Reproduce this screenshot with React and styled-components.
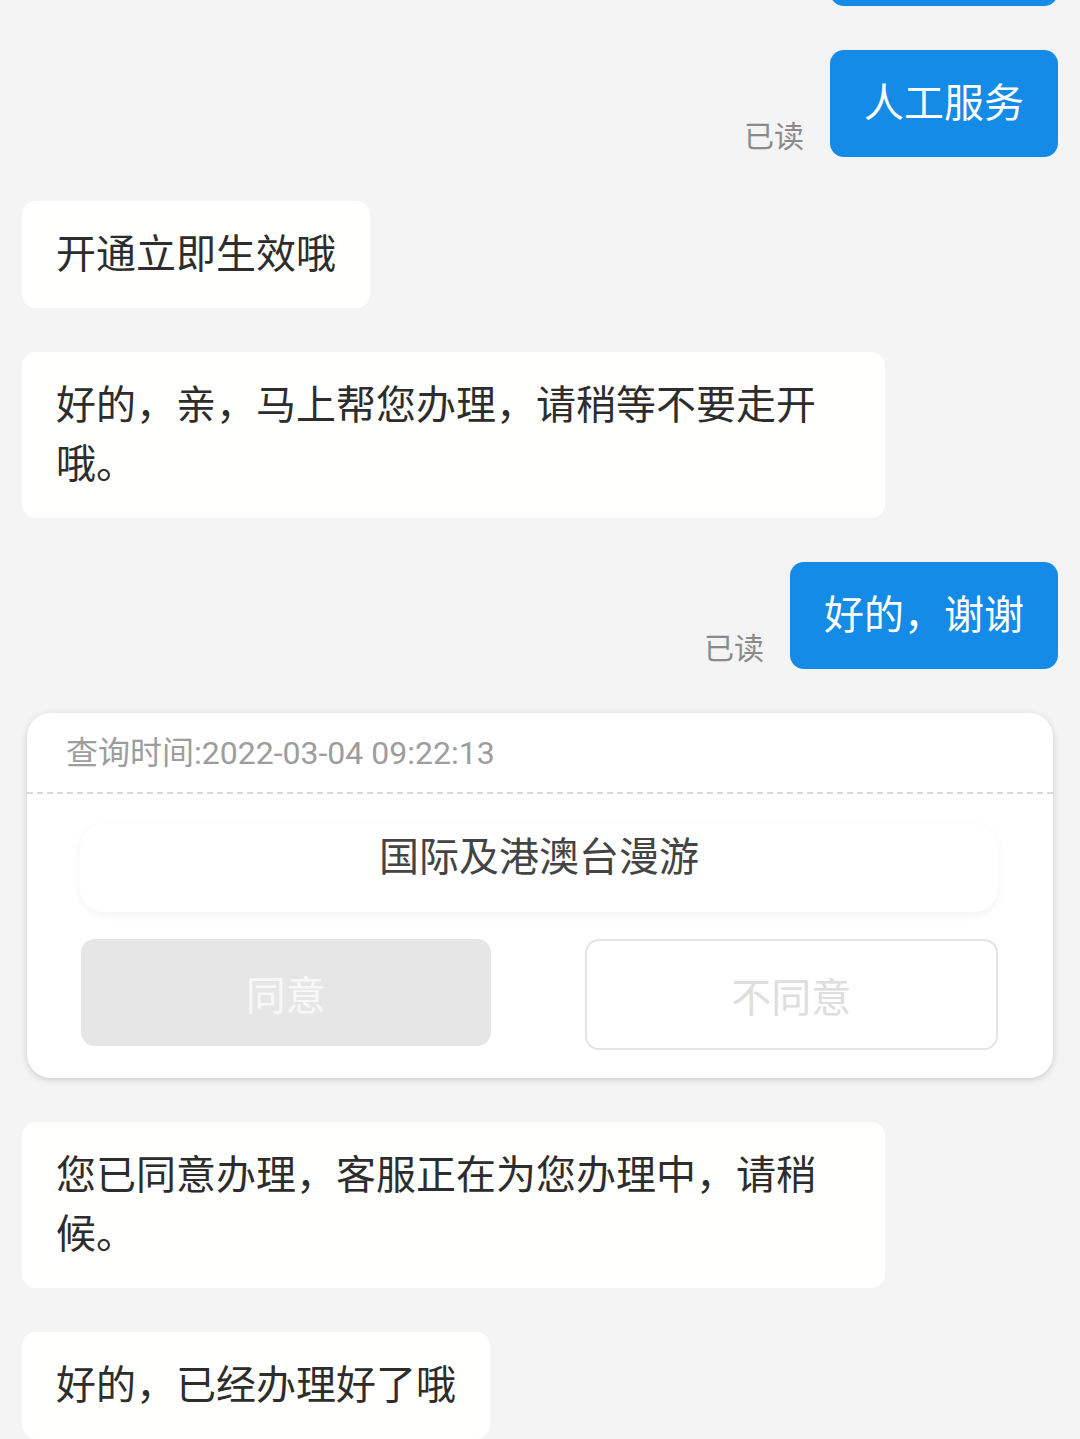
import React from "react";
import styled, { createGlobalStyle } from "styled-components";

const GlobalStyle = createGlobalStyle`
  body {
    margin: 0;
    background: #f4f4f4;
    font-family: "Roboto", "Noto Sans CJK SC", sans-serif;
  }
`;

const Page = styled.div`
  height: 1439px;
  overflow: hidden;
  background: #f4f4f4;
`;

const Thread = styled.div`
  display: flex;
  flex-direction: column;
  gap: 44px;
  padding: 0 22px;
  margin-top: -101px;
`;

const Row = styled.div`
  display: flex;
  align-items: flex-end;
  justify-content: ${({ mine }) => (mine ? "flex-end" : "flex-start")};
`;

const ReadMark = styled.span`
  font-size: 30px;
  line-height: 40px;
  color: #8a8a8a;
  margin-right: 26px;
`;

const Bubble = styled.div`
  max-width: 863px;
  box-sizing: border-box;
  padding: 24px 34px;
  border-radius: 14px;
  font-size: 40px;
  line-height: 59px;
  background: ${({ mine }) => (mine ? "#148be6" : "#fffffd")};
  color: ${({ mine }) => (mine ? "#ffffff" : "#2d2d2d")};
`;

const Card = styled.div`
  margin: 0 5px;
  background: #fff;
  border-radius: 24px;
  box-shadow: 0 2px 7px rgba(0, 0, 0, 0.16);
  padding-bottom: 28px;
`;

const CardHeader = styled.div`
  padding: 19px 39px 18px;
  font-size: 32px;
  line-height: 42px;
  color: #9d9d9d;
  border-bottom: 2px dashed #d8d8d8;
`;

const OptionBox = styled.div`
  margin: 30px 55px 0 53px;
  height: 88px;
  box-sizing: border-box;
  padding-top: 4px;
  border-radius: 24px;
  box-shadow: 0 3px 10px rgba(0, 0, 0, 0.05);
  text-align: center;
  font-size: 40px;
  line-height: 60px;
  color: #444;
`;

const ButtonRow = styled.div`
  display: flex;
  align-items: flex-start;
  gap: 94px;
  margin: 27px 55px 0 54px;
`;

const ActionButton = styled.div`
  flex: 1;
  height: ${({ outline }) => (outline ? "111px" : "107px")};
  box-sizing: border-box;
  display: flex;
  align-items: center;
  justify-content: center;
  border-radius: 14px;
  font-size: 40px;
  background: ${({ outline }) => (outline ? "#fff" : "#e6e6e6")};
  border: ${({ outline }) => (outline ? "2px solid #e4e4e4" : "none")};
  color: ${({ outline }) => (outline ? "#dedede" : "#f8f8f8")};
`;

const messages = [
  { mine: true, read: true, text: "人工服务" },
  { mine: true, read: true, text: "人工服务" },
  { mine: false, text: "开通立即生效哦" },
  { mine: false, text: "好的，亲，马上帮您办理，请稍等不要走开哦。" },
  { mine: true, read: true, text: "好的，谢谢" },
];

const after = [
  { mine: false, text: "您已同意办理，客服正在为您办理中，请稍候。" },
  { mine: false, text: "好的，已经办理好了哦" },
];

const Message = ({ mine, read, text }) => (
  <Row mine={mine}>
    {mine && read && <ReadMark>已读</ReadMark>}
    <Bubble mine={mine}>{text}</Bubble>
  </Row>
);

export default function App() {
  return (
    <Page>
      <GlobalStyle />
      <Thread>
        {messages.map((m, i) => (
          <Message key={i} {...m} />
        ))}
        <Card>
          <CardHeader>查询时间:2022-03-04 09:22:13</CardHeader>
          <OptionBox>国际及港澳台漫游</OptionBox>
          <ButtonRow>
            <ActionButton>同意</ActionButton>
            <ActionButton outline>不同意</ActionButton>
          </ButtonRow>
        </Card>
        {after.map((m, i) => (
          <Message key={i} {...m} />
        ))}
      </Thread>
    </Page>
  );
}
